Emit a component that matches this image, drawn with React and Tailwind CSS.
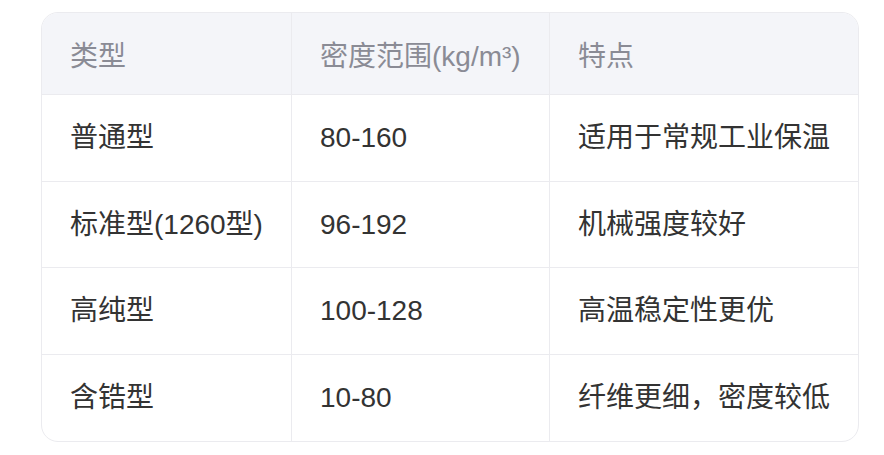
import React from "react";

const rows = [
  ["普通型", "80-160", "适用于常规工业保温"],
  ["标准型(1260型)", "96-192", "机械强度较好"],
  ["高纯型", "100-128", "高温稳定性更优"],
  ["含锆型", "10-80", "纤维更细，密度较低"],
];

export default function App() {
  return (
    <div className="min-h-screen bg-white pt-[12px] pl-[41px] font-['Liberation_Sans','Noto_Sans_CJK_SC',sans-serif] text-[28px]">
      <div className="w-[818px] overflow-hidden rounded-[17px] border border-[#ebebef]">
        {/* Header */}
        <div className="grid grid-cols-[250px_258px_1fr] bg-[#f4f5f9] text-[#8a8b95]">
          <div className="flex h-[82px] items-center border-r border-b border-[#ebebef] pl-[28px] pt-[7px]">类型</div>
          <div className="flex h-[82px] items-center border-r border-b border-[#ebebef] pl-[28px] pt-[7px]">密度范围(kg/m³)</div>
          <div className="flex h-[82px] items-center border-b border-[#ebebef] pl-[28px] pt-[7px]">特点</div>
        </div>
        {rows.map((row, i) => (
          <div
            key={i}
            className={`grid grid-cols-[250px_258px_1fr] text-[#333333] ${i === 1 || i === 3 ? "h-[86px]" : "h-[87px]"}`}
          >
            {row.map((cell, j) => (
              <div
                key={j}
                className={`flex items-center pl-[28px] ${j < 2 ? "border-r" : ""} ${
                  i < rows.length - 1 ? "border-b" : ""
                } border-[#ebebef]`}
              >
                {cell}
              </div>
            ))}
          </div>
        ))}
      </div>
    </div>
  );
}
